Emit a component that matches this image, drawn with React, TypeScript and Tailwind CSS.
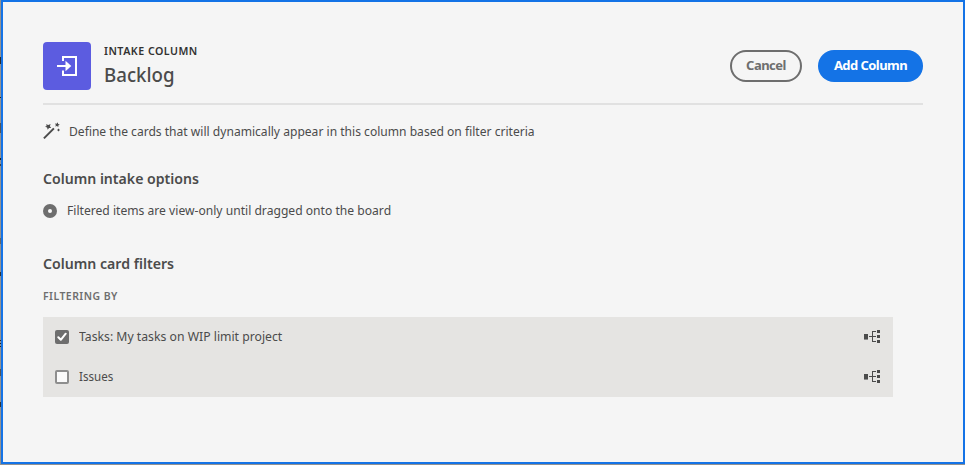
import type { ReactNode } from "react";

const backdropMarks = [
  { top: 57, height: 7, tone: "bg-[#2b2b2b]" },
  { top: 97, height: 1, tone: "bg-[#222222]" },
  { top: 123, height: 10, tone: "bg-[#555555]" },
  { top: 158, height: 2, tone: "bg-[#222222]" },
  { top: 164, height: 2, tone: "bg-[#444444]" },
  { top: 238, height: 6, tone: "bg-[#666666]" },
  { top: 272, height: 4, tone: "bg-[#333333]" },
  { top: 340, height: 1, tone: "bg-[#222222]" },
  { top: 343, height: 1, tone: "bg-[#222222]" },
  { top: 346, height: 1, tone: "bg-[#222222]" },
  { top: 369, height: 7, tone: "bg-[#555555]" },
  { top: 402, height: 5, tone: "bg-[#333333]" },
];

function IntakeIcon() {
  return (
    <svg width="22" height="22" viewBox="0 0 22 22" fill="none">
      <path d="M7 6V2h13v18H7v-4.500" stroke="white" strokeWidth="2" />
      <path d="M1 11h10" stroke="white" strokeWidth="2" />
      <path d="M9.500 5.800v10.400l5.800-5.200Z" fill="white" />
    </svg>
  );
}

function WandIcon() {
  return (
    <svg width="18" height="18" viewBox="0 0 18 18" fill="#4b4b4b" className="shrink-0">
      <path d="M.2 15.700 10.200 5.700l1.400 1.400L1.600 17.100Z" />
      <path d="m3 2.200 2.400.900 2.200-1.200-.700 2.300 1.300 1.900-2.200-.100-1.300 1.800-.600-2.200L2 4.800l1.700-.900Z" />
      <path d="m14.800.300.300 1.700 1.700.500-1.500.900v1.700l-1.400-1.100-1.700.500.700-1.600-1-1.400 1.700.200Z" />
      <path d="m15.500 6.600 1.300 1.400-1.300 1.400L14.200 8Z" />
    </svg>
  );
}

function HierarchyIcon() {
  return (
    <svg width="18" height="16" viewBox="0 0 18 16" shapeRendering="crispEdges">
      <path d="M1 5h4v5H1zM14 1h3v3h-3zM14 6h3v3h-3zM14 11h3v3h-3z" fill="#4b4b4b" />
      <path d="M1 10h4v1H1z" fill="#8e8e8e" />
      <path d="M6 7h7v1H6zM9 2h1v11H9zM9 2h4v1H9zM9 12h4v1H9z" fill="#4b4b4b" />
    </svg>
  );
}

function Squeeze({ className, children }: { className: string; children: ReactNode }) {
  return <span className={`inline-block origin-left whitespace-nowrap ${className}`}>{children}</span>;
}

function FilterRow({ checked, children }: { checked: boolean; children: ReactNode }) {
  return (
    <div className="flex h-10 items-center pr-3 pl-3">
      {checked ? (
        <span className="flex size-3.5 items-center justify-center rounded-[2px] bg-[#6e6e6e]">
          <svg width="10" height="10" viewBox="0 0 10 10" fill="none">
            <path d="m1.300 5.200 2.500 2.600L8.700 1.700" stroke="white" strokeWidth="2" strokeLinecap="round" strokeLinejoin="round" />
          </svg>
        </span>
      ) : (
        <span className="size-3.5 rounded-[2px] border-2 border-[#8e8e8e] bg-[#fafafa]" />
      )}
      <span className="mb-0.5 ml-2.5 text-[13px] leading-5">{children}</span>
      <span className="ml-auto flex">
        <HierarchyIcon />
      </span>
    </div>
  );
}

export default function App() {
  return (
    <div className="flex h-[465px] w-[965px] overflow-hidden bg-[#929292] font-['Noto_Sans','Open_Sans',sans-serif] text-[#4b4b4b]">
      <div className="relative w-px shrink-0">
        {backdropMarks.map((m) => (
          <span key={m.top} className={`absolute left-0 w-px ${m.tone}`} style={{ top: m.top, height: m.height }} />
        ))}
      </div>
      <main className="flex h-[464px] w-[964px] flex-col border-2 border-[#1473e6] bg-[#f5f5f5] pt-10 pr-10 pl-10">
        <header className="flex h-[63px] w-[880px] shrink-0 items-start border-b-2 border-[#e1e1e1]">
          <div className="flex size-12 items-center justify-center rounded-[4px] bg-[#5c5ce0]">
            <IntakeIcon />
          </div>
          <div className="ml-[13px] flex flex-col">
            <p className="mt-px h-4 text-[11px] leading-4 font-semibold text-[#323232]">
              <Squeeze className="scale-x-[0.969] tracking-[0.5px]">INTAKE COLUMN</Squeeze>
            </p>
            <h1 className="mt-1 h-6 text-[20px] leading-6 font-medium">
              <Squeeze className="scale-x-[0.934]">Backlog</Squeeze>
            </h1>
          </div>
          <div className="mt-2 ml-auto flex gap-4">
            <button className="flex h-8 w-[72px] items-center justify-center rounded-full border-2 border-[#6e6e6e] text-[13px] font-bold text-[#6e6e6e]">
              <span className="tracking-[-0.5px]">Cancel</span>
            </button>
            <button className="flex h-8 w-[105px] items-center justify-center rounded-full bg-[#1473e6] text-[13px] font-bold text-white">
              <span className="whitespace-nowrap tracking-[-0.55px]">Add Column</span>
            </button>
          </div>
        </header>
        <div className="mt-4 flex h-5 items-center text-[13px] leading-5">
          <WandIcon />
          <span className="ml-2">
            <Squeeze className="scale-x-[0.929]">Define the cards that will dynamically appear in this column based on filter criteria</Squeeze>
          </span>
        </div>
        <h2 className="mt-[27px] h-5 text-[15px] leading-5 font-semibold">
          <Squeeze className="scale-x-[0.94]">Column intake options</Squeeze>
        </h2>
        <div className="mt-3 flex h-5 items-center text-[13px] leading-5">
          <span className="mt-0.5 flex size-3.5 items-center justify-center rounded-full bg-[#6e6e6e]">
            <span className="size-1 rounded-full bg-[#fafafa]" />
          </span>
          <span className="ml-2.5">
            <Squeeze className="scale-x-[0.932]">Filtered items are view-only until dragged onto the board</Squeeze>
          </span>
        </div>
        <h2 className="mt-[33px] h-5 text-[15px] leading-5 font-semibold">
          <Squeeze className="scale-x-[0.942]">Column card filters</Squeeze>
        </h2>
        <p className="mt-[15px] h-4 text-[11px] leading-4 font-semibold text-[#6e6e6e]">
          <Squeeze className="scale-x-[0.95] tracking-[0.5px]">FILTERING BY</Squeeze>
        </p>
        <section className="mt-[13px] w-[850px] bg-[#e5e4e2]">
          <FilterRow checked>
            <Squeeze className="scale-x-[0.94]">Tasks: My tasks on WIP limit project</Squeeze>
          </FilterRow>
          <FilterRow checked={false}>
            <Squeeze className="scale-x-[0.89]">Issues</Squeeze>
          </FilterRow>
        </section>
      </main>
    </div>
  );
}
